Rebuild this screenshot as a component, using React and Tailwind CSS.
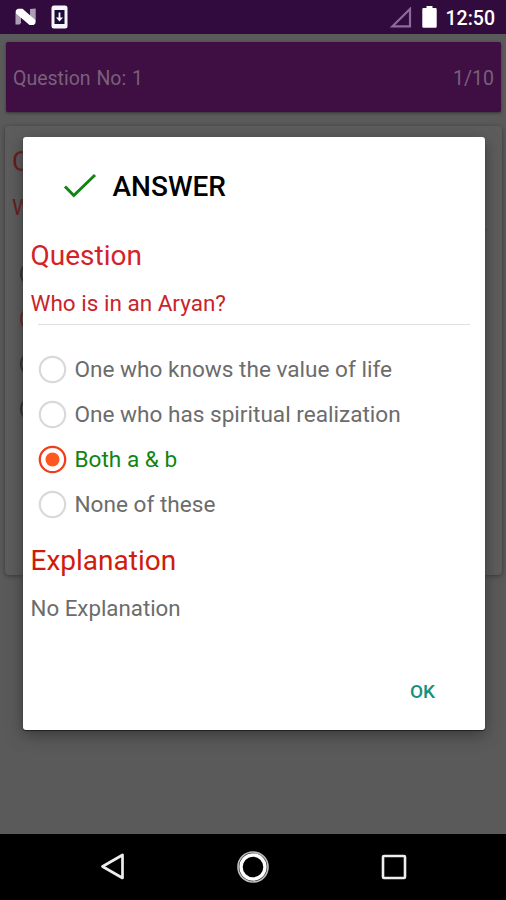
const OPTIONS = [
  "One who knows the value of life",
  "One who has spiritual realization",
  "Both a & b",
  "None of these",
];
const ANSWER = 2;

function StatusBar() {
  return (
    <header className="flex h-[34px] items-center bg-[#320b3e] pr-[11px] pl-[15px] text-white">
      <svg width="21" height="18" viewBox="0 0 21 18">
        <path d="M0.500 3 2 1.500 6 5V15L4.500 16.500H.5zM15 1 20.700 .5V14.500L15 12z" fill="#ad9db4" />
        <path d="M1 2.200 3 .8H7.500L20.300 12V15.500L18.700 17H14.500L1 5.500z" fill="#fff" />
      </svg>
      <svg className="ml-[15px]" width="17" height="24" viewBox="0 0 17 24">
        <rect x="0.5" y="0.5" width="16" height="23" rx="2.5" fill="#f7f5fa" />
        <rect x="3.5" y="5" width="10" height="14" fill="#1d0b3a" />
        <path d="M7.600 7.500h1.800v5h2.700L8.500 16.500 4.900 12.500h2.700z" fill="#fff" />
      </svg>
      <svg className="ml-auto" width="22" height="21" viewBox="0 0 22 21">
        <path d="M2.500 19.300H20V2z" fill="none" stroke="#8c6c9b" strokeWidth="2.200" />
      </svg>
      <svg className="ml-[10px]" width="15" height="22" viewBox="0 0 15 22">
        <path d="M4.500 0h6v2H13.500a1.200 1.200 0 0 1 1.200 1.200V20.500a1.200 1.200 0 0 1-1.200 1.200H1.500A1.200 1.200 0 0 1 .3 20.500V3.200A1.200 1.200 0 0 1 1.500 2H4.500z" fill="#fff" />
      </svg>
      <span className="mt-1 ml-[9px] text-[19.500px] leading-none font-medium">12:50</span>
    </header>
  );
}

function Radio({ checked }) {
  return (
    <svg className="-mt-px shrink-0" width="29" height="29" viewBox="0 0 29 29">
      <circle cx="14.500" cy="14.500" r="12.700" fill="none" stroke={checked ? "#f13d1b" : "#d9d9d9"} strokeWidth={checked ? 2.300 : 2.200} />
      {checked && <circle cx="14.500" cy="14.500" r="7" fill="#ff5722" />}
    </svg>
  );
}

function QuizPage() {
  return (
    <main className="h-[800px] bg-[#5a5a5a] pt-2 pr-[4px] pl-[5px]">
      <section className="mx-px flex h-[70px] items-center justify-between rounded-xs bg-[#3f0e43] px-[7px] pt-[3px] text-[19.500px] text-[#77617b] shadow-[0_1px_3px_#333]">
        <span className="[word-spacing:1px]">Question No: 1</span>
        <span>1/10</span>
      </section>
      <section className="mt-[14px] h-[449px] rounded-sm bg-[#5d5d5d] px-[7px] pt-[18px] shadow-[0_1px_4px_#363636]">
        <h2 className="text-[28px] leading-9 text-[#6b1519]">Q</h2>
        <p className="mt-[14px] text-[22px] leading-7 text-[#6b1519]">W</p>
        <hr className="mr-[7px] ml-4 mt-[7px] border-[#4d4d4d]" />
        <ul className="mt-[21px] ml-[8px]">
          {OPTIONS.map((option, i) => (
            <li key={option} className="flex h-[45px] items-center">
              <span className={`size-[26px] rounded-full border-2 ${i === 1 ? "border-[#711b12]" : "border-[#262626]"}`} />
            </li>
          ))}
        </ul>
      </section>
    </main>
  );
}

function AnswerDialog() {
  return (
    <section role="dialog" className="absolute top-[137px] left-[23px] flex h-[592.500px] w-[461.500px] flex-col rounded-[3px] bg-white px-[7.500px] shadow-[0_1px_1px_#222,0_5px_16px_#393939]">
      <div className="flex h-[98px] items-center pl-[32px]">
        <svg className="-mt-px" width="34" height="26" viewBox="0 0 34 26">
          <path d="M2 13.500 10.800 22.500 32 2" fill="none" stroke="#118411" strokeWidth="3" />
        </svg>
        <h1 className="mt-0.5 ml-[16px] text-[28px] leading-none font-medium text-black">ANSWER</h1>
      </div>
      <h2 className="mt-[3px] text-[28px] leading-9 text-[#d3232a]">Question</h2>
      <p className="mt-[15px] text-[22.500px] leading-7 text-[#c9242a]">Who is in an Aryan?</p>
      <hr className="mt-[7px] mr-[7px] ml-[7px] border-[#e0e0e0]" />
      <ul className="mt-[22px] ml-[7px]">
        {OPTIONS.map((option, i) => (
          <li key={option} className={`flex h-[45px] items-center gap-2 text-[22.600px] ${i === ANSWER ? "text-[#118411]" : "text-[#6c6c6c]"}`}>
            <Radio checked={i === ANSWER} />
            <span>{option}</span>
          </li>
        ))}
      </ul>
      <h2 className="mt-[16px] text-[28px] leading-9 text-[#d01c0c]">Explanation</h2>
      <p className="mt-[15px] text-[22.300px] leading-7 text-[#6c6c6c]">No Explanation</p>
      <button className="mt-auto mr-[42px] mb-[26px] self-end text-[19px] leading-6 font-medium text-[#13917a]">OK</button>
    </section>
  );
}

function NavigationBar() {
  return (
    <nav className="flex h-[66px] items-center bg-black">
      <svg className="ml-[99px]" width="27" height="30" viewBox="0 0 27 30">
        <path d="M3.500 14.500 23.500 3V26z" fill="none" stroke="#eee" strokeWidth="2.700" strokeLinejoin="round" />
      </svg>
      <svg className="ml-[110px]" width="34" height="34" viewBox="0 0 34 34">
        <circle cx="17" cy="17" r="15" fill="none" stroke="#bbb" strokeWidth="1.700" />
        <circle cx="17" cy="17" r="12" fill="none" stroke="#fff" strokeWidth="3.400" />
      </svg>
      <svg className="ml-[111px]" width="26" height="26" viewBox="0 0 26 26">
        <rect x="2" y="2" width="22" height="22" rx="1" fill="none" stroke="#eee" strokeWidth="2.600" />
      </svg>
    </nav>
  );
}

export default function App() {
  return (
    <div className="relative h-[900px] w-[506px] overflow-hidden font-[Roboto,sans-serif]">
      <StatusBar />
      <QuizPage />
      <AnswerDialog />
      <NavigationBar />
    </div>
  );
}
